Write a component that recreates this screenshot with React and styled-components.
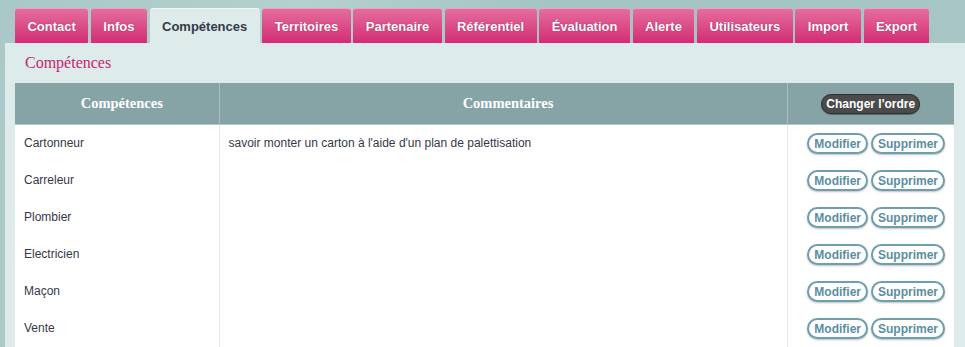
import React from 'react';
import styled, { createGlobalStyle } from 'styled-components';

const GlobalStyle = createGlobalStyle`
  html, body {
    margin: 0;
    padding: 0;
    background: #a7c6c5;
    font-family: 'Liberation Sans', Arial, sans-serif;
    overflow: hidden;
  }
`;

const Page = styled.div`
  width: 965px;
  height: 347px;
  padding: 8px 0 0 5px;
  box-sizing: border-box;
  background: linear-gradient(100deg, #a9c8c7 0%, #b4d0cf 30%, #a3c4c3 55%, #a7c6c5 100%);
`;

const TabBar = styled.nav`
  display: flex;
  gap: 2.8px;
  padding-left: 10px;
  height: 35px;
`;

const Tab = styled.div`
  display: flex;
  align-items: center;
  padding: 0 12.4px;
  height: 35px;
  box-sizing: border-box;
  border-radius: 3px 3px 0 0;
  font-size: 13px;
  font-weight: bold;
  color: ${(p) => (p.active ? '#37394a' : '#ffffff')};
  text-shadow: ${(p) => (p.active ? 'none' : '0 0 1px rgba(90, 0, 40, 0.6)')};
  background: ${(p) =>
    p.active ? '#ddeceb' : 'linear-gradient(to bottom, #e46e9d 0%, #d42c75 100%)'};
  border-top: 1px solid ${(p) => (p.active ? '#eef6f5' : '#ef9fc0')};
`;

const Panel = styled.section`
  width: 962px;
  height: 304px;
  background: #ddeceb;
  border-radius: 0 3px 0 0;
  padding: 0 0 0 10px;
  box-sizing: border-box;
`;

const PanelTitle = styled.h2`
  margin: 0;
  height: 40px;
  display: flex;
  align-items: center;
  padding-left: 10px;
  font-family: 'Liberation Serif', 'DejaVu Serif', serif;
  font-weight: normal;
  font-size: 16px;
  color: #c81e6e;
`;

const Table = styled.table`
  width: 939px;
  border-collapse: collapse;
  table-layout: fixed;
  background: #ffffff;
`;

const HeadCell = styled.th`
  height: 41px;
  padding: 0 0 0 ${(p) => (p.plain ? 0 : 10)}px;
  background: #86a4a5;
  color: #ffffff;
  font-family: 'Liberation Serif', 'DejaVu Serif', serif;
  font-size: 14.5px;
  font-weight: bold;
  text-align: center;
  border-left: 1px solid #a9c0c1;
  border-bottom: 1px solid #b0c6c6;
  &:first-child {
    border-left: none;
  }
`;

const Cell = styled.td`
  height: 35px;
  padding: ${(p) => (p.right ? '1px 9px 1px' : '0 9px 2px')};
  font-size: 12px;
  color: #363848;
  text-align: ${(p) => (p.right ? 'right' : 'left')};
  border-left: 1px solid #e8e8e8;
  white-space: nowrap;
  &:first-child {
    border-left: none;
  }
`;

const OrderButton = styled.button`
  height: 20px;
  padding: 0 4px;
  border: 1px solid #2e2e2e;
  border-radius: 10px;
  background: #4b4b4b;
  color: #ffffff;
  font-family: 'Liberation Sans', Arial, sans-serif;
  font-size: 12px;
  font-weight: bold;
  box-shadow: 0 1px 1px rgba(0, 0, 0, 0.35);
  cursor: pointer;
`;

const Actions = styled.div`
  display: flex;
  justify-content: flex-end;
  gap: 3px;
`;

const ActionButton = styled.button`
  height: 21px;
  padding: 0 5px;
  border: 2px solid #6e9fae;
  border-radius: 11px;
  background: #ffffff;
  color: #5a8ea1;
  font-family: 'Liberation Sans', Arial, sans-serif;
  font-size: 12px;
  font-weight: bold;
  box-shadow: 0 1px 2px rgba(0, 0, 0, 0.25);
  cursor: pointer;
`;

const tabs = [
  'Contact',
  'Infos',
  'Compétences',
  'Territoires',
  'Partenaire',
  'Référentiel',
  'Évaluation',
  'Alerte',
  'Utilisateurs',
  'Import',
  'Export',
];

const rows = [
  { name: 'Cartonneur', comment: "savoir monter un carton à l'aide d'un plan de palettisation" },
  { name: 'Carreleur', comment: '' },
  { name: 'Plombier', comment: '' },
  { name: 'Electricien', comment: '' },
  { name: 'Maçon', comment: '' },
  { name: 'Vente', comment: '' },
];

export default function App() {
  return (
    <Page>
      <GlobalStyle />
      <TabBar>
        {tabs.map((t) => (
          <Tab key={t} active={t === 'Compétences'}>
            {t}
          </Tab>
        ))}
      </TabBar>
      <Panel>
        <PanelTitle>Compétences</PanelTitle>
        <Table>
          <colgroup>
            <col style={{ width: 204 }} />
            <col style={{ width: 568 }} />
            <col style={{ width: 167 }} />
          </colgroup>
          <thead>
            <tr>
              <HeadCell>Compétences</HeadCell>
              <HeadCell>Commentaires</HeadCell>
              <HeadCell plain>
                <OrderButton>Changer l'ordre</OrderButton>
              </HeadCell>
            </tr>
          </thead>
          <tbody>
            {rows.map((r) => (
              <tr key={r.name}>
                <Cell>{r.name}</Cell>
                <Cell>{r.comment}</Cell>
                <Cell right>
                  <Actions>
                    <ActionButton>Modifier</ActionButton>
                    <ActionButton>Supprimer</ActionButton>
                  </Actions>
                </Cell>
              </tr>
            ))}
          </tbody>
        </Table>
      </Panel>
    </Page>
  );
}
